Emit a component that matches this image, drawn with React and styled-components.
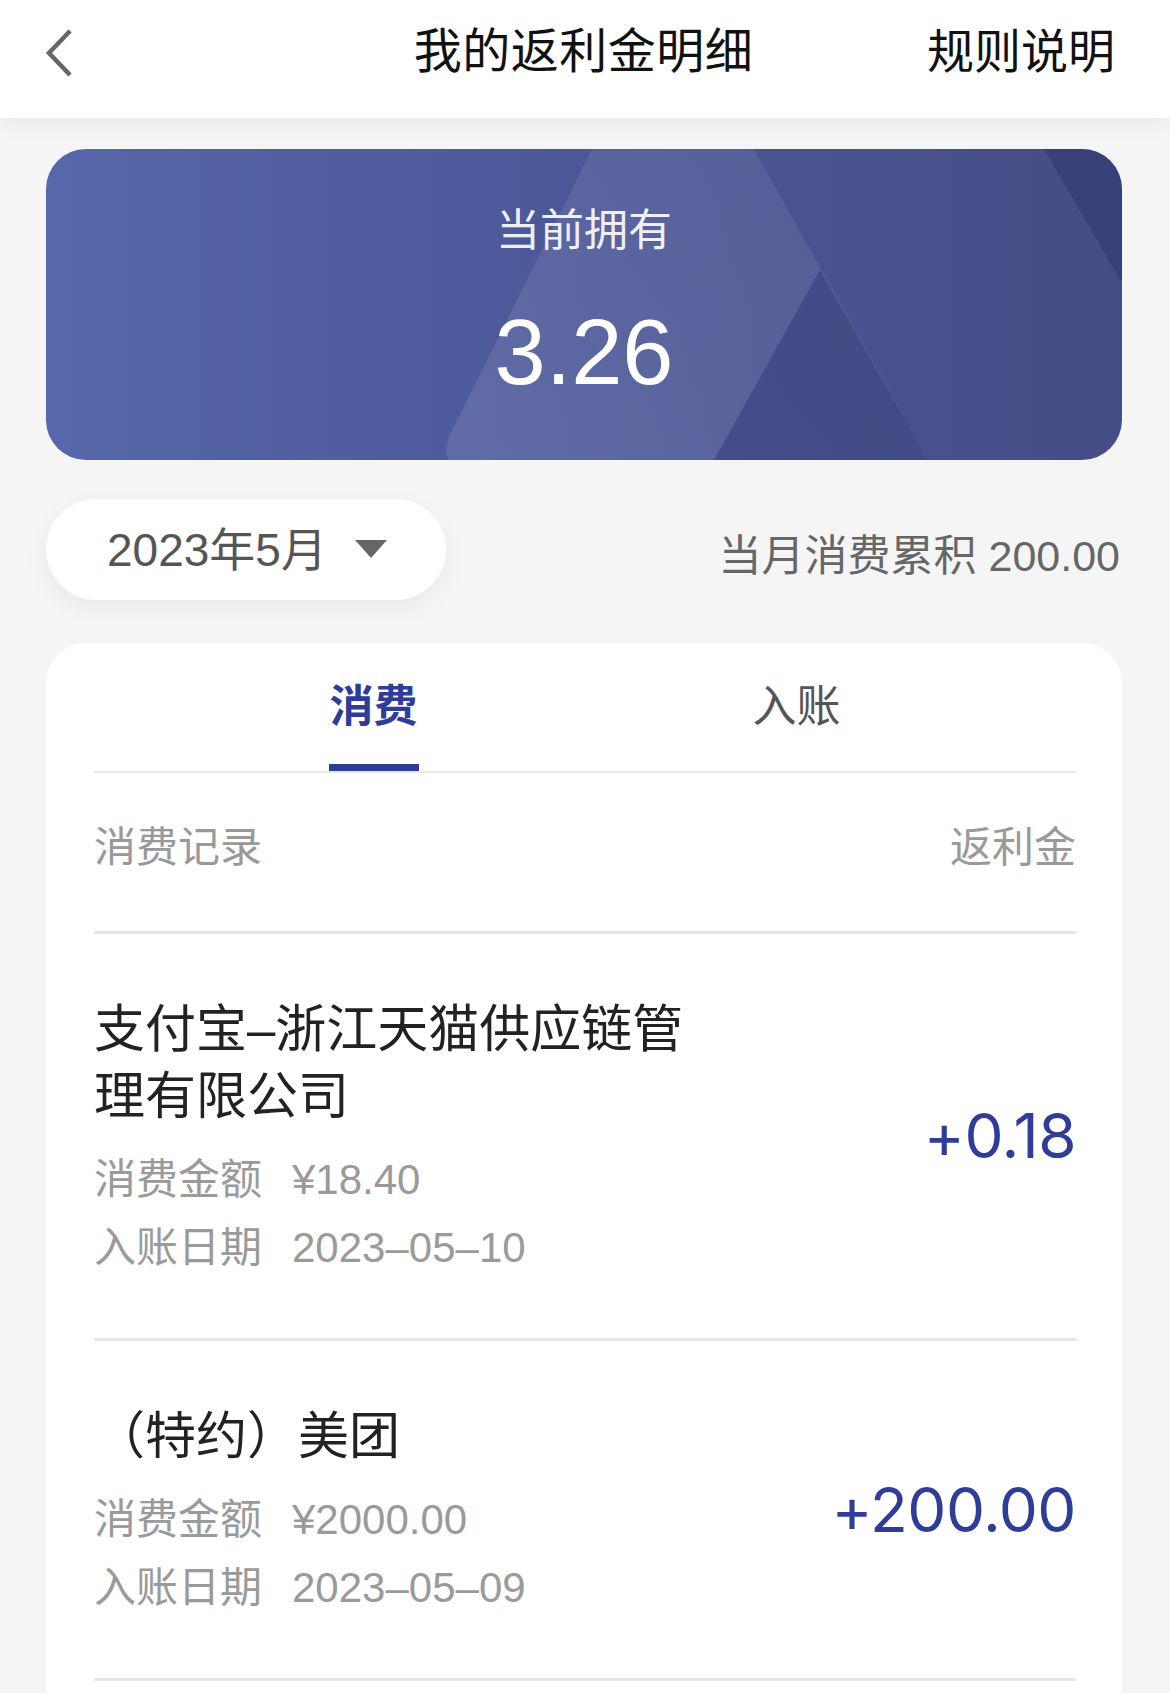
import React from "react";
import styled, { createGlobalStyle } from "styled-components";

const GlobalStyle = createGlobalStyle`
  html, body {
    margin: 0;
    padding: 0;
    background: #f5f5f5;
  }
  body {
    font-family: "Liberation Sans", "Noto Sans CJK SC", sans-serif;
    -webkit-font-smoothing: antialiased;
  }
  * { box-sizing: border-box; }
`;

const Page = styled.div`
  width: 1170px;
  min-height: 1693px;
  background: #f5f5f5;
  overflow: hidden;
`;

const Header = styled.header`
  position: relative;
  z-index: 2;
  height: 118px;
  background: #ffffff;
  box-shadow: 0 4px 22px rgba(0, 0, 0, 0.06);
  display: grid;
  grid-template-columns: 1fr auto 1fr;
  align-items: start;
  padding: 22px 55px 0 44px;
`;

const BackButton = styled.button`
  justify-self: start;
  border: 0;
  background: none;
  padding: 0;
  margin-top: 6px;
  width: 32px;
  height: 50px;
  display: flex;
  align-items: center;
  cursor: pointer;
`;

const Title = styled.h1`
  margin: 0 0 0 8px;
  font-size: 48px;
  line-height: 60px;
  font-weight: 400;
  color: #111;
  letter-spacing: 0.5px;
`;

const HeaderAction = styled.span`
  justify-self: end;
  font-size: 47px;
  line-height: 60px;
  color: #111;
`;

const Content = styled.main`
  padding: 0 48px 0 46px;
`;

const Banner = styled.section`
  position: relative;
  margin-top: 31px;
  height: 311px;
  border-radius: 40px;
  overflow: hidden;
  background: linear-gradient(90deg, #5767ab 0%, #4b5797 50%, #454d85 100%);
  display: flex;
  flex-direction: column;
  align-items: center;
  padding-top: 54px;
`;

const BannerArt = styled.svg`
  position: absolute;
  inset: 0;
  width: 100%;
  height: 100%;
`;

const BannerLabel = styled.div`
  position: relative;
  font-size: 44px;
  line-height: 56px;
  color: rgba(255, 255, 255, 0.92);
`;

const BannerAmount = styled.div`
  position: relative;
  margin-top: 43px;
  font-size: 92px;
  line-height: 100px;
  color: #ffffff;
`;

const FilterRow = styled.div`
  margin-top: 39px;
  display: flex;
  align-items: center;
  justify-content: space-between;
`;

const MonthPicker = styled.button`
  height: 101px;
  width: 400px;
  border: 0;
  border-radius: 51px;
  background: #ffffff;
  box-shadow: 0 8px 24px rgba(0, 0, 0, 0.05);
  display: flex;
  align-items: center;
  gap: 28px;
  padding: 0 0 8px 61px;
  font-family: inherit;
  font-size: 46px;
  color: #555;
  cursor: pointer;
`;

const Caret = styled.span`
  width: 0;
  height: 0;
  border-left: 16px solid transparent;
  border-right: 16px solid transparent;
  border-top: 18px solid #666;
  margin-top: 6px;
`;

const MonthTotal = styled.span`
  margin-top: 4px;
  font-size: 43px;
  color: #666;
  padding-right: 2px;
`;

const ListCard = styled.section`
  margin-top: 43px;
  background: #ffffff;
  border-radius: 40px 40px 0 0;
  padding: 0 46px 80px 48px;
`;

const TabBar = styled.div`
  display: flex;
  height: 130px;
  padding: 0 68px;
  border-bottom: 2px solid #e8e8e8;
`;

const Tab = styled.div`
  flex: 1;
  display: flex;
  justify-content: center;
`;

const TabLabel = styled.span`
  display: flex;
  flex-direction: column;
  align-items: center;
  height: 128px;
  padding-top: 42px;
  font-size: 44px;
  line-height: 44px;
  font-weight: ${(p) => (p.$active ? 700 : 400)};
  color: ${(p) => (p.$active ? "#2f3d99" : "#555")};
  &::after {
    content: "";
    margin-top: auto;
    width: 90px;
    height: 7px;
    background: ${(p) => (p.$active ? "#2f3d99" : "transparent")};
  }
`;

const ListHead = styled.div`
  display: flex;
  justify-content: space-between;
  padding: 46px 0 54px;
  font-size: 42px;
  line-height: 58px;
  color: #999;
  border-bottom: 3px solid #e5e5e5;
`;

const Row = styled.div`
  display: flex;
  align-items: center;
  justify-content: space-between;
  padding: 62px 0 56px;
  border-bottom: 3px solid #e6e6e6;
`;

const RowInfo = styled.div`
  display: flex;
  flex-direction: column;
`;

const Merchant = styled.div`
  max-width: 615px;
  font-size: 51px;
  line-height: 67px;
  color: #222;
`;

const MetaList = styled.div`
  margin-top: 16px;
`;

const Meta = styled.div`
  display: flex;
  font-size: 42px;
  line-height: 68px;
  color: #9a9a9a;
`;

const MetaValue = styled.span`
  margin-left: 30px;
`;

const Rebate = styled.div`
  margin-top: -6px;
  font-family: "Inter", "Liberation Sans", sans-serif;
  font-size: 62px;
  line-height: 1;
  color: #2f3d99;
  letter-spacing: -0.5px;
`;

const records = [
  {
    name: "支付宝–浙江天猫供应链管理有限公司",
    amount: "¥18.40",
    date: "2023–05–10",
    rebate: "+0.18",
  },
  {
    name: "（特约）美团",
    amount: "¥2000.00",
    date: "2023–05–09",
    rebate: "+200.00",
  },
];

function BackIcon() {
  return (
    <svg width="30" height="50" viewBox="0 0 30 50" fill="none">
      <polyline
        points="26,3 5,25 26,47"
        stroke="#666"
        strokeWidth="4.5"
        strokeLinecap="butt"
        strokeLinejoin="miter"
      />
    </svg>
  );
}

function BannerDecoration() {
  return (
    <BannerArt viewBox="0 0 1076 311" preserveAspectRatio="none" aria-hidden="true">
      <defs>
        <linearGradient id="band" x1="0" y1="1" x2="1" y2="0">
          <stop offset="0" stopColor="#ffffff" stopOpacity="0.11" />
          <stop offset="1" stopColor="#ffffff" stopOpacity="0.05" />
        </linearGradient>
      </defs>
      <path d="M622,-153 L890,325 L430,325 Q394,325 402,290 Z" fill="url(#band)" />
      <path d="M774,121 L668,311 L882,311 Z" fill="#333d78" fillOpacity="0.55" />
      <path d="M998,0 L1076,0 L1076,134 Z" fill="#2f3770" fillOpacity="0.55" />
    </BannerArt>
  );
}

export default function App() {
  return (
    <Page>
      <GlobalStyle />
      <Header>
        <BackButton aria-label="返回">
          <BackIcon />
        </BackButton>
        <Title>我的返利金明细</Title>
        <HeaderAction>规则说明</HeaderAction>
      </Header>
      <Content>
        <Banner>
          <BannerDecoration />
          <BannerLabel>当前拥有</BannerLabel>
          <BannerAmount>3.26</BannerAmount>
        </Banner>
        <FilterRow>
          <MonthPicker>
            2023年5月
            <Caret />
          </MonthPicker>
          <MonthTotal>当月消费累积 200.00</MonthTotal>
        </FilterRow>
        <ListCard>
          <TabBar>
            <Tab>
              <TabLabel $active>消费</TabLabel>
            </Tab>
            <Tab>
              <TabLabel>入账</TabLabel>
            </Tab>
          </TabBar>
          <ListHead>
            <span>消费记录</span>
            <span>返利金</span>
          </ListHead>
          {records.map((r) => (
            <Row key={r.date}>
              <RowInfo>
                <Merchant>{r.name}</Merchant>
                <MetaList>
                  <Meta>
                    <span>消费金额</span>
                    <MetaValue>{r.amount}</MetaValue>
                  </Meta>
                  <Meta>
                    <span>入账日期</span>
                    <MetaValue>{r.date}</MetaValue>
                  </Meta>
                </MetaList>
              </RowInfo>
              <Rebate>{r.rebate}</Rebate>
            </Row>
          ))}
        </ListCard>
      </Content>
    </Page>
  );
}
